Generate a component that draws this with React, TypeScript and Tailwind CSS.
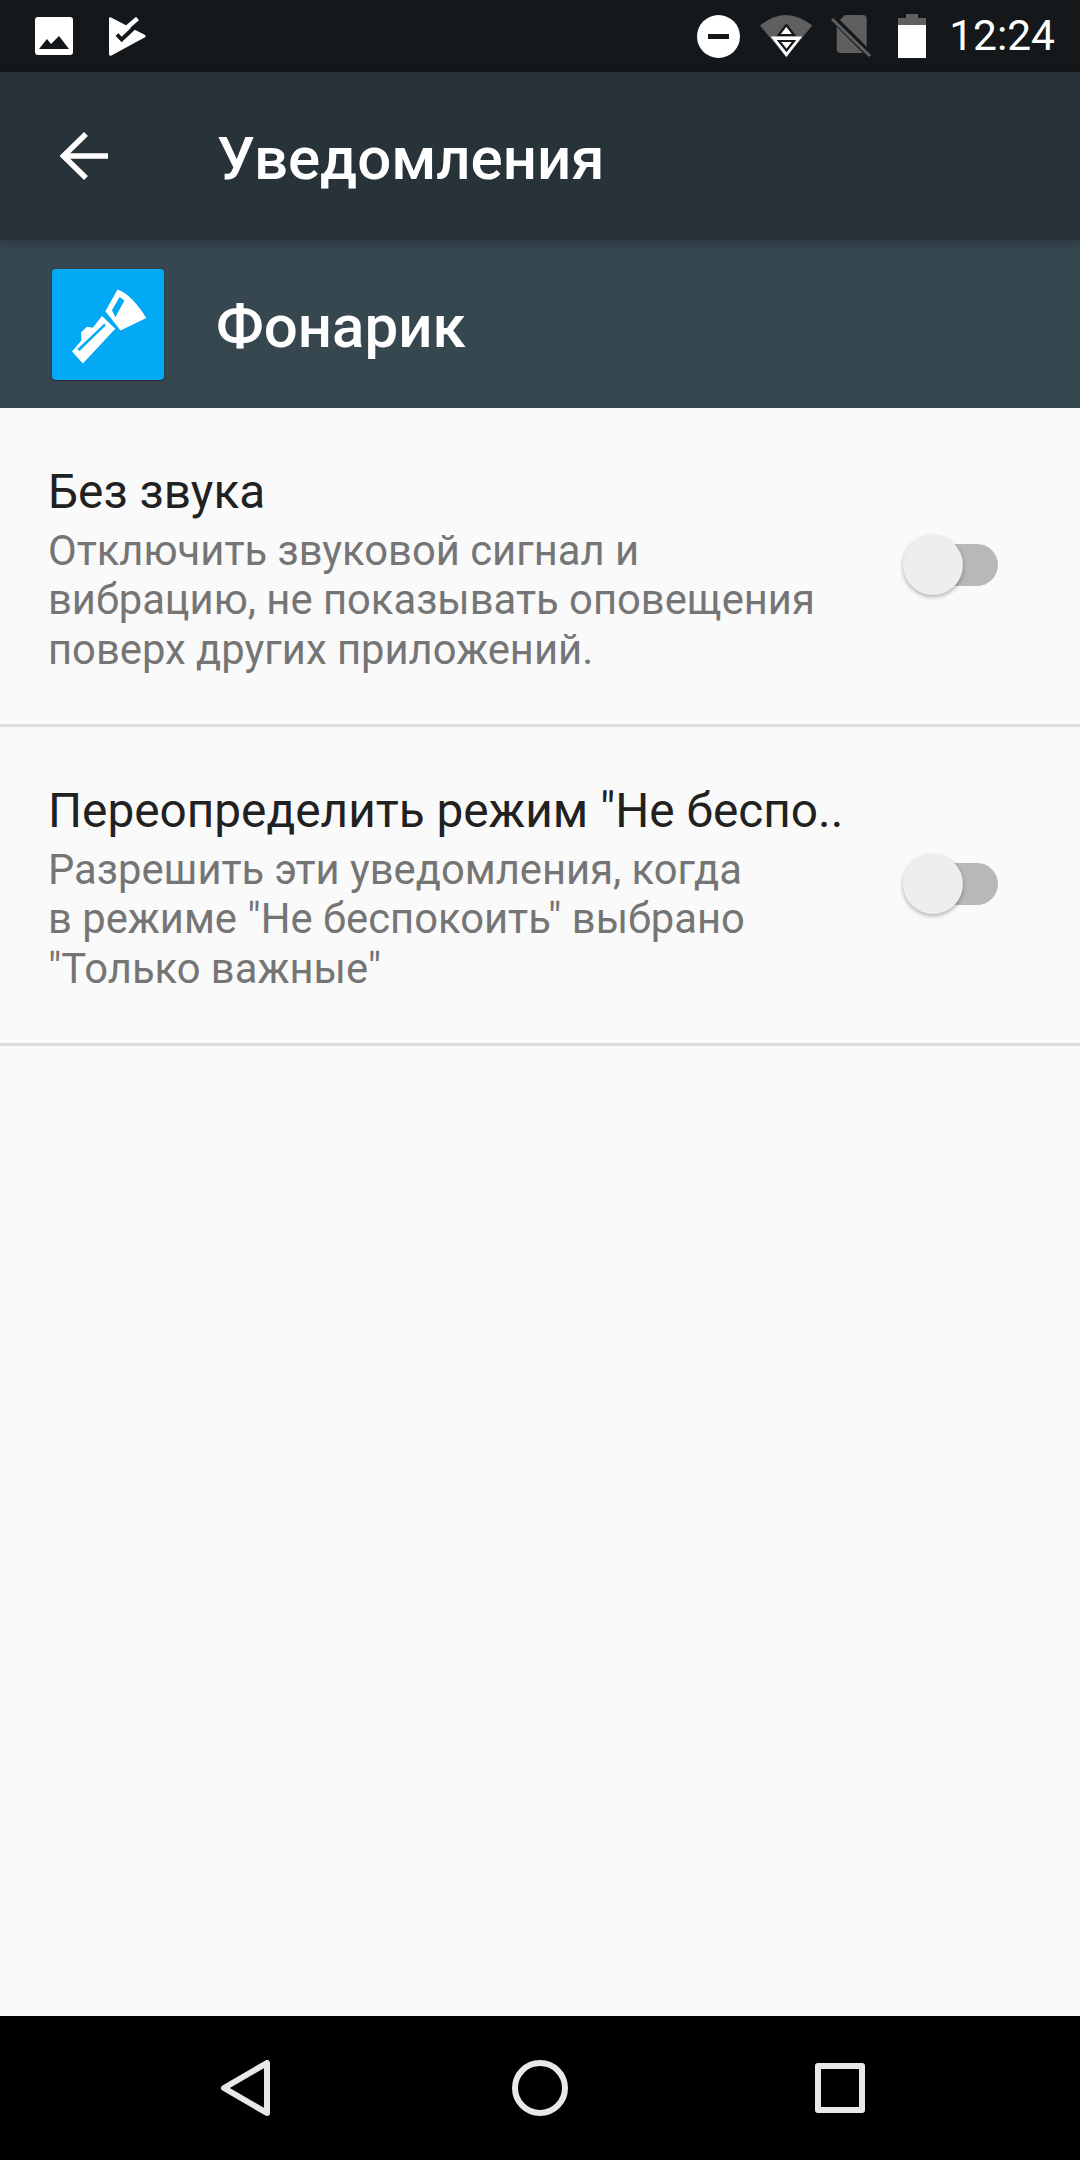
const roboto = "font-['Roboto',sans-serif]";

function ImageIcon() {
  return (
    <svg width="38" height="38" viewBox="0 0 38 38">
      <rect width="38" height="38" rx="3" fill="#fff" />
      <path d="M4 32 L12 22 L16 27 L24 19 L34 32 Z" fill="#14181b" />
    </svg>
  );
}

function TasksIcon() {
  return (
    <svg width="37" height="39" viewBox="0 0 37 39">
      <path d="M0 1.5 Q0 -0.5 2 0.5 L36 18 Q37.5 19.5 35.5 20.5 L2.5 38.5 Q0 39.5 0 37 Z" fill="#fff" />
      <path d="M8 17.5 L12.7 22.5 L29 7" fill="none" stroke="#14181b" strokeWidth="4" />
      <path d="M18 5 L29 14 L33 5 L33 0 Z" fill="#14181b" />
      <path d="M14 14 L28.5 1.5" fill="none" stroke="#fff" strokeWidth="4.5" />
    </svg>
  );
}

function DndIcon() {
  return (
    <svg width="43" height="43" viewBox="0 0 43 43">
      <circle cx="21.5" cy="21.5" r="21.5" fill="#fff" />
      <rect x="11" y="19" width="21" height="5" fill="#14181b" />
    </svg>
  );
}

function WifiIcon() {
  return (
    <svg width="53" height="43" viewBox="0 0 53 43">
      <path d="M0 10.6 Q26 -10.6 52.3 10.6 L26.3 42 Z" fill="#5f5f5f" />
      <path d="M10.7 21.6 H42.3 L26.3 42 Z" fill="#fff" />
      <path d="M26.3 10 L34 20 H18.7 Z" fill="#fff" stroke="#14181b" strokeWidth="2.2" />
      <path d="M19 26 H34 L26.5 35.5 Z" fill="#fff" stroke="#14181b" strokeWidth="2.2" />
    </svg>
  );
}

function SimOffIcon() {
  return (
    <svg width="40" height="42" viewBox="0 0 40 42">
      <path d="M14 0 H31.5 Q35.7 0 35.7 4 V34 Q35.7 38 32 38 H9.5 Q5.7 38 5.7 34 V8 Z" fill="#5f5f5f" />
      <path d="M1 2 L38 39" stroke="#14181b" strokeWidth="7" />
      <path d="M1 4 L39 41" stroke="#5f5f5f" strokeWidth="3" />
    </svg>
  );
}

function BatteryIcon() {
  return (
    <svg width="28" height="44" viewBox="0 0 28 44">
      <path d="M8 0 H20 V4 H28 V44 H0 V4 H8 Z" fill="#5f5f5f" />
      <rect y="11" width="28" height="33" fill="#fff" />
    </svg>
  );
}

function BackArrow() {
  return (
    <svg width="48" height="48" viewBox="0 0 48 48" fill="none" stroke="#fff" strokeWidth="5.5">
      <path d="M48 24 H4" />
      <path d="M26 2 L3.5 24 L26 46" />
    </svg>
  );
}

function FlashlightIcon() {
  return (
    <div className="flex h-[111px] w-[112px] items-center justify-center rounded-[4px] bg-[#03a9f4] shadow-[0_1px_2px_rgba(0,0,0,0.4)]">
      <svg width="112" height="111" viewBox="0 0 336 336">
        <path
          fillRule="evenodd"
          d="M197 62 Q238 76 284 148 L206 186 L160 128 Z M203 85 L218 95 L190 146 L180 125 Z"
          fill="#fff"
        />
        <path d="M150 142 L190 181 L92 286 L59 250 L88 216 L86 192 L104 175 L122 178 Z" fill="#fff" />
        <path d="M75 243 L157 165 L161 171 L82 248 Z" fill="#03a9f4" />
      </svg>
    </div>
  );
}

function Toggle() {
  return (
    <div className="relative mb-[2px] h-[60px] w-[95px] shrink-0">
      <div className="absolute right-0 top-[9px] h-[42px] w-[84px] rounded-full bg-[#b8b8b8]" />
      <div className="absolute left-0 top-0 h-[60px] w-[60px] rounded-full bg-[#eeeeee] shadow-[0_2px_4px_rgba(0,0,0,0.3)]" />
    </div>
  );
}

function SettingRow({ title, lines }: { title: string; lines: string[] }) {
  return (
    <div className="flex h-[319px] items-center justify-between border-b-[3px] border-[#dcdcdc] pl-[48px] pr-[82px]">
      <div className="flex flex-col pt-[4px]">
        <div className="text-[47.75px] leading-[60px] text-[#212121]">{title}</div>
        <div className="mt-[4px] text-[41.75px] leading-[49.5px] text-[#757575]">
          {lines.map((line) => (
            <div key={line}>{line}</div>
          ))}
        </div>
      </div>
      <Toggle />
    </div>
  );
}

export default function App() {
  return (
    <div className={`flex h-[2160px] w-[1080px] flex-col bg-[#fafafa] ${roboto}`}>
      <div className="flex h-[72px] items-center justify-between bg-[#14181b] pl-[35px] pr-[25px]">
        <div className="flex items-center gap-[36px]">
          <ImageIcon />
          <TasksIcon />
        </div>
        <div className="flex items-center">
          <DndIcon />
          <div className="ml-[20px]"><WifiIcon /></div>
          <div className="ml-[18px]"><SimOffIcon /></div>
          <div className="ml-[27px]"><BatteryIcon /></div>
          <div className="ml-[23px] text-[42.5px] leading-[72px] text-white">12:24</div>
        </div>
      </div>

      <div className="relative z-10 flex h-[168px] items-center bg-[#283339] pl-[60px] shadow-[0_3px_8px_rgba(0,0,0,0.22)]">
        <BackArrow />
        <div className="ml-[109px] pt-[6px] text-[60px] font-medium text-white">Уведомления</div>
      </div>

      <div className="flex h-[168px] items-center bg-[#37474f] pl-[52px]">
        <FlashlightIcon />
        <div className="ml-[52px] pt-[6px] text-[60px] font-medium text-white">Фонарик</div>
      </div>

      <div className="flex-1">
        <SettingRow
          title="Без звука"
          lines={[
            "Отключить звуковой сигнал и",
            "вибрацию, не показывать оповещения",
            "поверх других приложений.",
          ]}
        />
        <SettingRow
          title={'Переопределить режим "Не беспо..'}
          lines={[
            "Разрешить эти уведомления, когда",
            'в режиме "Не беспокоить" выбрано',
            '"Только важные"',
          ]}
        />
      </div>

      <div className="flex h-[144px] items-center justify-between bg-black pl-[221px] pr-[215px]">
        <svg width="50" height="56" viewBox="0 0 50 56" fill="none" stroke="#e8e8e8" strokeWidth="6" strokeLinejoin="round">
          <path d="M46 3 V53 L3 28 Z" />
        </svg>
        <svg width="56" height="56" viewBox="0 0 56 56" fill="none" stroke="#e8e8e8" strokeWidth="6">
          <circle cx="28" cy="28" r="25" />
        </svg>
        <svg width="56" height="50" viewBox="-6 0 56 50" fill="none" stroke="#e8e8e8" strokeWidth="6" strokeLinejoin="round">
          <rect x="3" y="3" width="44" height="44" />
        </svg>
      </div>
    </div>
  );
}
